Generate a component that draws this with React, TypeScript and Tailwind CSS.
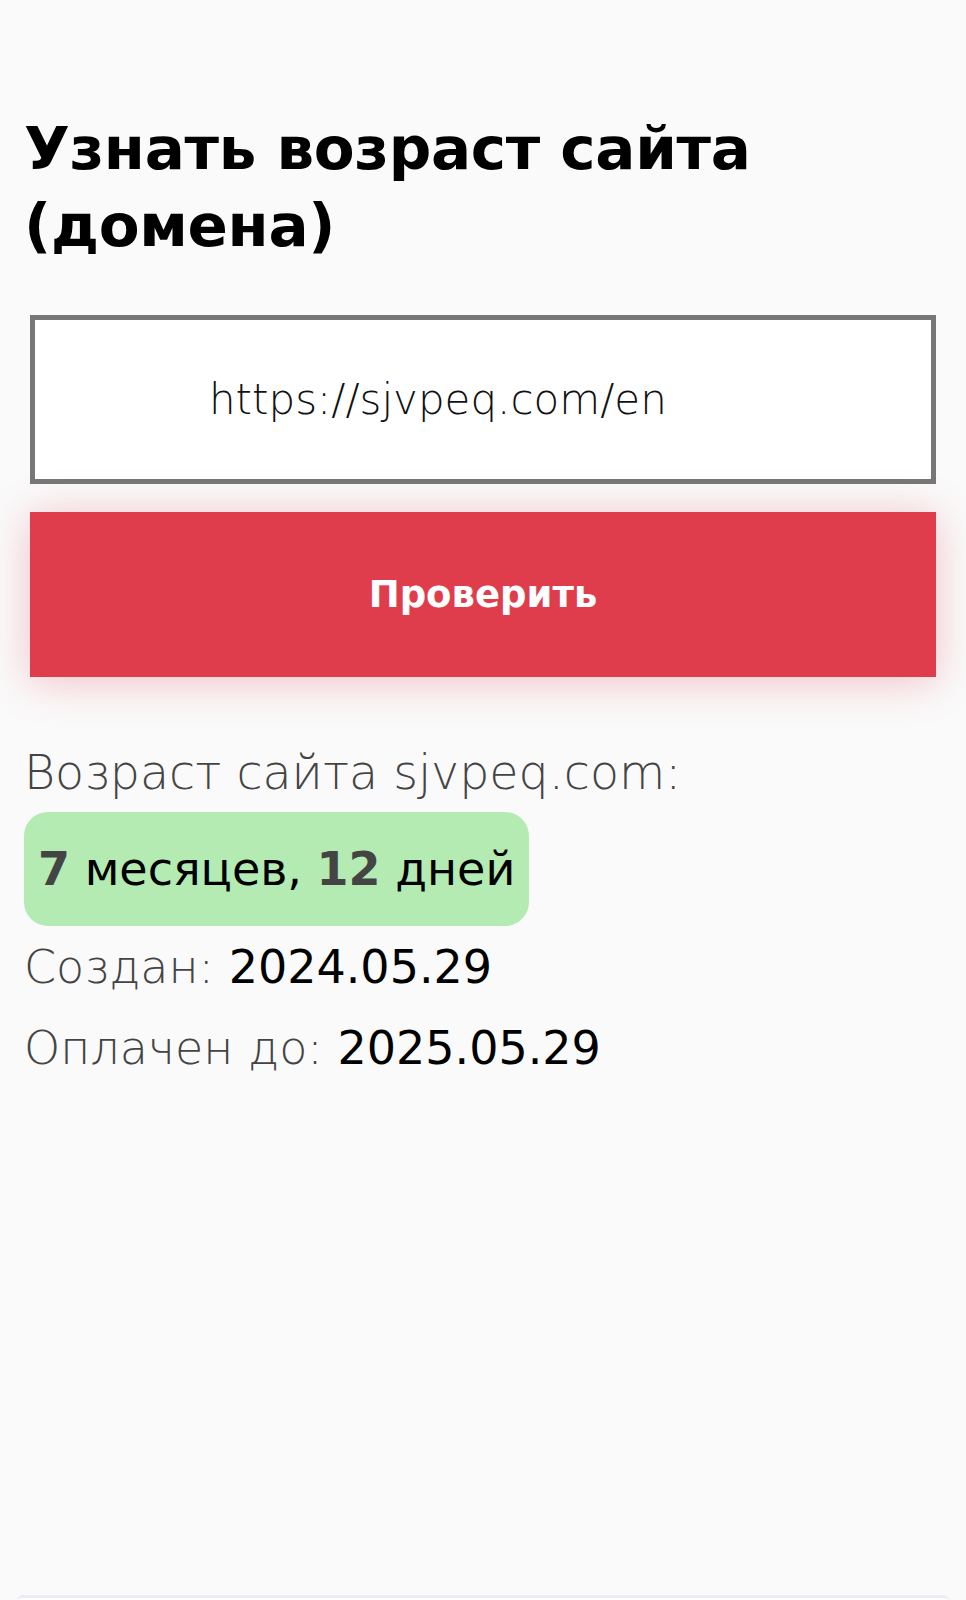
export default function App() {
  return (
    <div className="min-h-[1600px] bg-[#fafafa] font-['DejaVu_Sans',sans-serif] overflow-hidden">
      <div className="px-[24px] pt-[110px]">
        <h1 className="text-[59.5px] leading-[77px] font-bold text-black tracking-[-0.3px]">
          Узнать возраст сайта (домена)
        </h1>

        <div className="mx-[6px] mt-[51px] h-[169px] border-[5px] border-[#777] bg-white flex items-center pl-[174px]">
          <span className="text-[42px] font-extralight text-[#111]">https://sjvpeq.com/en</span>
        </div>

        <button className="mx-[6px] mt-[28px] h-[165px] w-[906px] bg-[#df3c4c] text-white text-[37px] font-bold shadow-[0_4px_40px_rgba(223,60,76,0.3)] flex items-center justify-center">
          Проверить
        </button>

        <div className="mt-[66px] text-[47.5px] leading-[60px] text-[#444] font-extralight">
          Возраст сайта sjvpeq.com:
        </div>

        <div className="mt-[9px] inline-flex items-center h-[114px] px-[14px] rounded-[24px] bg-[#b3ebb2] text-[46px] text-black">
          <b className="font-bold text-[#444]">7</b>&nbsp;месяцев,&nbsp;<b className="font-bold text-[#444]">12</b>&nbsp;дней
        </div>

        <div className="mt-[1px] text-[46px] leading-[81px] font-extralight text-[#444]">
          Создан: <span className="text-black font-normal">2024.05.29</span>
        </div>
        <div className="text-[46px] leading-[81px] font-extralight text-[#444]">
          Оплачен до: <span className="text-black font-normal">2025.05.29</span>
        </div>
      </div>

      <div className="mx-[17px] mt-[506px] h-[40px] rounded-t-[6px] bg-white border-t-[3px] border-[#ececf8]" />
    </div>
  );
}
